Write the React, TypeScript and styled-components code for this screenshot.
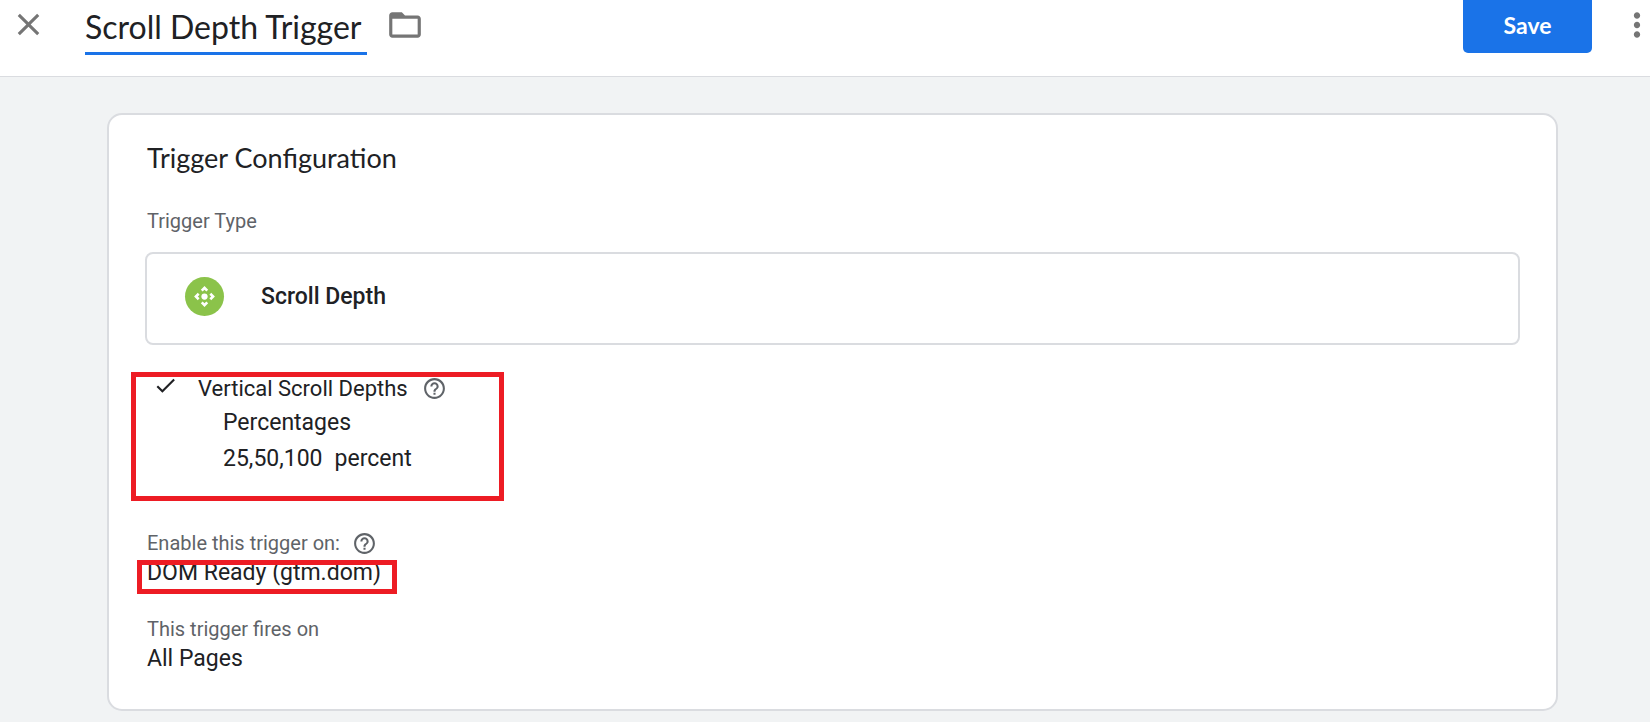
import React from "react";
import styled, { createGlobalStyle } from "styled-components";
import {
  MdCheck,
  MdClose,
  MdControlCamera,
  MdFolderOpen,
  MdHelpOutline,
  MdMoreVert,
} from "react-icons/md";

const GlobalStyle = createGlobalStyle`
  * { box-sizing: border-box; }
  body {
    margin: 0;
    background: #f1f3f4;
    color: #202124;
    font-family: Roboto, "Liberation Sans", sans-serif;
    font-size: 23px;
    line-height: 30px;
  }
  button { border: 0; padding: 0; background: none; font: inherit; cursor: pointer; }
  svg { display: block; flex: none; }
`;

const Header = styled.header`
  height: 77px;
  background: #fff;
  border-bottom: 1px solid #dadce0;
  overflow: hidden;
`;

const Toolbar = styled.div`
  display: flex;
  align-items: center;
  height: 49px;
  padding-left: 10px;
`;

const IconButton = styled.button`
  display: flex;
  flex: none;
  align-items: center;
  color: #757575;
`;

const MoreButton = styled(IconButton)`
  width: 32px;
`;

const TitleInput = styled.input`
  flex: none;
  width: 282px;
  height: 60px;
  margin: 0 19px 0 38px;
  padding: 6px 0 0;
  border: 0;
  outline: 0;
  border-bottom: 3px solid #1a73e8;
  background: none;
  color: #202124;
  font-family: Lato, "Liberation Sans", sans-serif;
  font-size: 32px;
`;

const SaveButton = styled.button`
  && {
    flex: none;
    width: 129px;
    height: 57px;
    margin: 0 26px 0 auto;
    border-radius: 5px;
    background: #1a73e8;
    color: #fff;
    font-family: Lato, "Liberation Sans", sans-serif;
    font-weight: 700;
  }
`;

const Card = styled.section`
  margin: 36px 92px 12px 107px;
  padding: 27px 36px 35px;
  border: 2px solid #dadce0;
  border-radius: 15px;
  background: #fff;
`;

const CardTitle = styled.h2`
  margin: 0 2px 32px;
  font-family: Lato, "Liberation Sans", sans-serif;
  font-size: 27px;
  font-weight: 400;
  line-height: 32px;
`;

const Label = styled.div`
  display: flex;
  align-items: center;
  gap: 12px;
  margin: 0 2px;
  color: #5f6368;
  font-size: 20px;
`;

const TypeBox = styled.button`
  && {
    display: flex;
    align-items: center;
    gap: 37px;
    width: 100%;
    height: 93px;
    margin: 16px 0 28px;
    padding: 0 38px 4px;
    border: 2px solid #dadce0;
    border-radius: 8px;
    color: #202124;
    font-weight: 500;
  }
`;

const TypeBadge = styled.span`
  display: flex;
  align-items: center;
  justify-content: center;
  width: 39px;
  height: 39px;
  border-radius: 50%;
  background: #8bc34a;
  color: #fff;
`;

const Group = styled.div`
  position: relative;
  margin: 0 2px;
`;

const Option = styled.div`
  display: flex;
  align-items: center;
  gap: 14px;
  padding-left: 6px;
  font-size: 22px;
`;

const CheckMark = styled(MdCheck)`
  margin: 0 6px 6px 0;
`;

const HelpButton = styled(IconButton)`
  && { color: #5f6368; }
`;

const Detail = styled.div`
  display: flex;
  gap: 12px;
  padding: 3px 0 3px 76px;
`;

const Percentages = styled.div`
  margin: 1px 0 51px;
`;

const Value = styled(Group)`
  margin-bottom: 26px;
`;

const Outline = styled.span<{ $width: number; $height: number; $left: number; $top: number }>`
  position: absolute;
  left: ${(p) => p.$left}px;
  top: ${(p) => p.$top}px;
  width: ${(p) => p.$width}px;
  height: ${(p) => p.$height}px;
  border: 5px solid #ed1c24;
  pointer-events: none;
`;

export default function App() {
  return (
    <>
      <GlobalStyle />
      <Header>
        <Toolbar>
          <IconButton aria-label="Close"><MdClose size={37} /></IconButton>
          <TitleInput aria-label="Trigger name" defaultValue="Scroll Depth Trigger" />
          <IconButton aria-label="Move to folder"><MdFolderOpen size={38} /></IconButton>
          <SaveButton>Save</SaveButton>
          <MoreButton aria-label="More options"><MdMoreVert size={38} /></MoreButton>
        </Toolbar>
      </Header>
      <main>
        <Card>
          <CardTitle>Trigger Configuration</CardTitle>
          <Label>Trigger Type</Label>
          <TypeBox>
            <TypeBadge><MdControlCamera size={25} /></TypeBadge>
            Scroll Depth
          </TypeBox>
          <Group>
            <Option>
              <CheckMark size={25} />
              <span>Vertical Scroll Depths</span>
              <HelpButton aria-label="About vertical scroll depths"><MdHelpOutline size={25} /></HelpButton>
            </Option>
            <Percentages>
              <Detail>Percentages</Detail>
              <Detail><span>25,50,100</span><span>percent</span></Detail>
            </Percentages>
            <Outline $left={-16} $top={-1} $width={373} $height={129} />
          </Group>
          <Label>
            Enable this trigger on:
            <HelpButton aria-label="About enabling this trigger"><MdHelpOutline size={25} /></HelpButton>
          </Label>
          <Value>
            DOM Ready (gtm.dom)
            <Outline $left={-10} $top={2} $width={260} $height={34} />
          </Value>
          <Label>This trigger fires on</Label>
          <Group>All Pages</Group>
        </Card>
      </main>
    </>
  );
}
